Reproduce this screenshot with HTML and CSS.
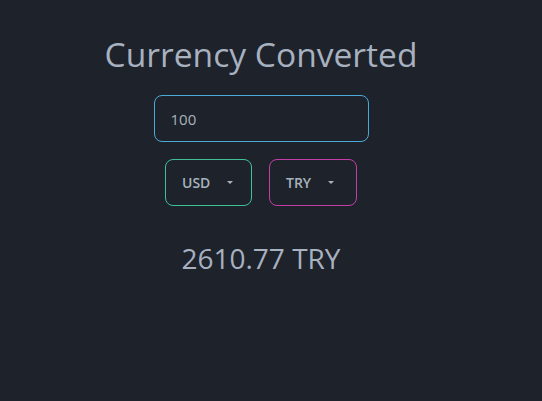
FILE: index.html
```html
<!DOCTYPE html>
<html>
<head>
<meta charset="utf-8">
<link rel="stylesheet" href="styles.css">
</head>
<body>
<div class="app">
  <h1 class="title">Currency Converted</h1>
  <div class="amount">100</div>
  <div class="selects">
    <div class="select select-from"><span>USD</span><span class="caret"></span></div>
    <div class="select select-to"><span>TRY</span><span class="caret"></span></div>
  </div>
  <div class="result">2610.77 TRY</div>
</div>
</body>
</html>
```
FILE: styles.css
```css
html, body {
  margin: 0;
  height: 100%;
  background: #1e222a;
}
body {
  font-family: "Open Sans", "Noto Sans", sans-serif;
  color: #a2acba;
}
.app {
  width: 522px;
  display: flex;
  flex-direction: column;
  align-items: center;
  padding-top: 30px;
}
.title {
  margin: 0;
  font-weight: 400;
  font-size: 33.6px;
  line-height: 48px;
  color: #a7b1c0;
}
.amount {
  margin-top: 17px;
  width: 215px;
  height: 47px;
  box-sizing: border-box;
  border: 1px solid #4caad9;
  border-radius: 8px;
  padding-left: 16px;
  display: flex;
  align-items: center;
  font-size: 15px;
  color: #a8b2bf;
}
.selects {
  margin-top: 17px;
  display: flex;
  gap: 17px;
}
.select {
  width: 87px;
  height: 47px;
  box-sizing: border-box;
  border-radius: 8px;
  display: flex;
  align-items: center;
  padding-left: 16px;
  font-size: 14px;
  font-weight: 600;
  color: #a8b2bf;
}
.select-from { border: 1px solid #40c193; }
.select-to { border: 1px solid #c43da7; width: 88px; }
.caret {
  margin-left: 17px;
  width: 0;
  height: 0;
  border-left: 3.5px solid transparent;
  border-right: 3.5px solid transparent;
  border-top: 3.5px solid #a8b2bf;
}
.result {
  margin-top: 32px;
  font-size: 28px;
  line-height: 40px;
  color: #a7b1c0;
}
```
